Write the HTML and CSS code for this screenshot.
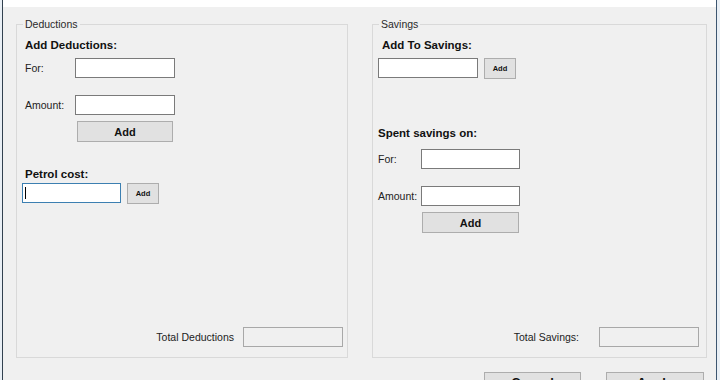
FILE: index.html
```html
<!DOCTYPE html>
<html>
<head>
<meta charset="utf-8">
<link rel="stylesheet" href="styles.css">
</head>
<body>
<div class="frame">
  <div class="titlestrip"></div>
  <div class="groups">
    <fieldset class="group group-left">
      <legend>Deductions</legend>
      <div class="inner inner-left">
        <div class="heading">Add Deductions:</div>
        <div class="row row-first">
          <span class="lbl lbl-left">For:</span>
          <span class="tb"></span>
        </div>
        <div class="row row-next">
          <span class="lbl lbl-left">Amount:</span>
          <span class="tb"></span>
        </div>
        <button class="btn btn-big btn-big-left">Add</button>
        <div class="heading heading-petrol">Petrol cost:</div>
        <div class="row row-petrol">
          <span class="tb tb-focus"><span class="caret"></span></span>
          <button class="btn btn-small">Add</button>
        </div>
        <div class="total total-left">
          <span class="lbl lbl-total-left">Total Deductions</span>
          <span class="tb tb-readonly"></span>
        </div>
      </div>
    </fieldset>
    <fieldset class="group group-right">
      <legend>Savings</legend>
      <div class="inner inner-right">
        <div class="heading heading-savings">Add To Savings:</div>
        <div class="row row-first">
          <span class="tb"></span>
          <button class="btn btn-small">Add</button>
        </div>
        <div class="heading heading-spent">Spent savings on:</div>
        <div class="row row-spent-for">
          <span class="lbl lbl-right">For:</span>
          <span class="tb tb-narrow"></span>
        </div>
        <div class="row row-next">
          <span class="lbl lbl-right">Amount:</span>
          <span class="tb tb-narrow"></span>
        </div>
        <button class="btn btn-big btn-big-right">Add</button>
        <div class="total total-right">
          <span class="lbl lbl-total-right">Total Savings:</span>
          <span class="tb tb-readonly"></span>
        </div>
      </div>
    </fieldset>
  </div>
  <div class="actions">
    <div class="btn btn-dialog btn-cancel">Cancel</div>
    <div class="btn btn-dialog btn-apply">Apply</div>
  </div>
</div>
</body>
</html>
```
FILE: styles.css
```css
html, body {
  margin: 0;
  padding: 0;
}
body {
  width: 720px;
  height: 380px;
  overflow: hidden;
  background: #e9eff5;
  font-family: "Liberation Sans", Arial, sans-serif;
  color: #1b1b1b;
}
.frame {
  margin-left: 2px;
  width: 715px;
  height: 380px;
  box-sizing: border-box;
  border-left: 1px solid #32414f;
  border-right: 1px solid #3d5670;
  background: #f0f0f0;
  overflow: hidden;
}
.titlestrip {
  height: 7px;
  background: #ffffff;
}
.groups {
  display: flex;
  margin-top: 11px;
  padding-left: 13px;
  gap: 24px;
}
.group {
  margin: 0;
  padding: 0;
  min-width: 0;
  border: 1px solid #d9d9d9;
  box-sizing: border-box;
}
.group-left { width: 332px; }
.group-right { width: 335px; }
.group legend {
  font-size: 10.5px;
  line-height: 12px;
  padding: 0 2px;
  margin-left: 6px;
  color: #2a2a2a;
}
.inner {
  height: 327px;
  display: flex;
  flex-direction: column;
  align-items: flex-start;
}
.inner-left { padding-left: 6px; }
.inner-right { padding-left: 5px; }
.heading {
  font-weight: bold;
  font-size: 11.5px;
  line-height: 14px;
  margin-top: 8px;
  margin-left: 2px;
  color: #111;
}
.heading-savings { margin-left: 4px; }
.heading-petrol { margin-top: 25px; }
.heading-spent { margin-top: 47px; margin-left: 0; }
.row {
  display: flex;
  align-items: flex-start;
}
.row-first { margin-top: 6px; }
.row-next { margin-top: 17px; }
.row-spent-for { margin-top: 9px; }
.row-petrol { margin-top: 2px; margin-left: -1px; }
.lbl {
  font-size: 10.5px;
  line-height: 20px;
  color: #222;
}
.lbl-left { width: 50px; margin-left: 2px; }
.lbl-right { width: 43px; }
.tb {
  display: block;
  width: 100px;
  height: 20px;
  box-sizing: border-box;
  background: #ffffff;
  border: 1px solid #7a7a7a;
}
.tb-narrow { width: 99px; }
.tb-focus {
  width: 99px;
  border-color: #3c7fb1;
  padding: 3px 0 0 2px;
}
.caret {
  display: block;
  width: 1px;
  height: 12px;
  background: #000;
}
.tb-readonly {
  background: #f0f0f0;
  border-color: #a8a8a8;
}
.btn {
  margin: 0;
  padding: 0;
  box-sizing: border-box;
  background: #e1e1e1;
  border: 1px solid #adadad;
  font-family: "Liberation Sans", Arial, sans-serif;
  font-weight: bold;
  color: #111;
  cursor: default;
}
.btn-small {
  width: 32px;
  height: 21px;
  margin-left: 6px;
  font-size: 7.5px;
}
.btn-big {
  width: 96px;
  height: 21px;
  font-size: 11px;
  margin-top: 6px;
}
.btn-big-left { margin-left: 54px; }
.btn-big-right { margin-left: 44px; width: 97px; }
.total {
  margin-top: auto;
  margin-bottom: 10px;
  align-self: stretch;
  display: flex;
  justify-content: flex-end;
  align-items: center;
}
.total-left { padding-right: 4px; }
.total-right { padding-right: 7px; }
.lbl-total-left { margin-right: 9px; }
.lbl-total-right { margin-right: 20px; }
.actions {
  display: flex;
  justify-content: flex-end;
  gap: 25px;
  margin-top: 14px;
  padding-right: 12px;
}
.btn-dialog {
  height: 23px;
  font-size: 13px;
  line-height: 15px;
  padding-top: 2px;
  text-align: center;
  flex: none;
}
.btn-cancel { width: 97px; }
.btn-apply { width: 98px; }
```
